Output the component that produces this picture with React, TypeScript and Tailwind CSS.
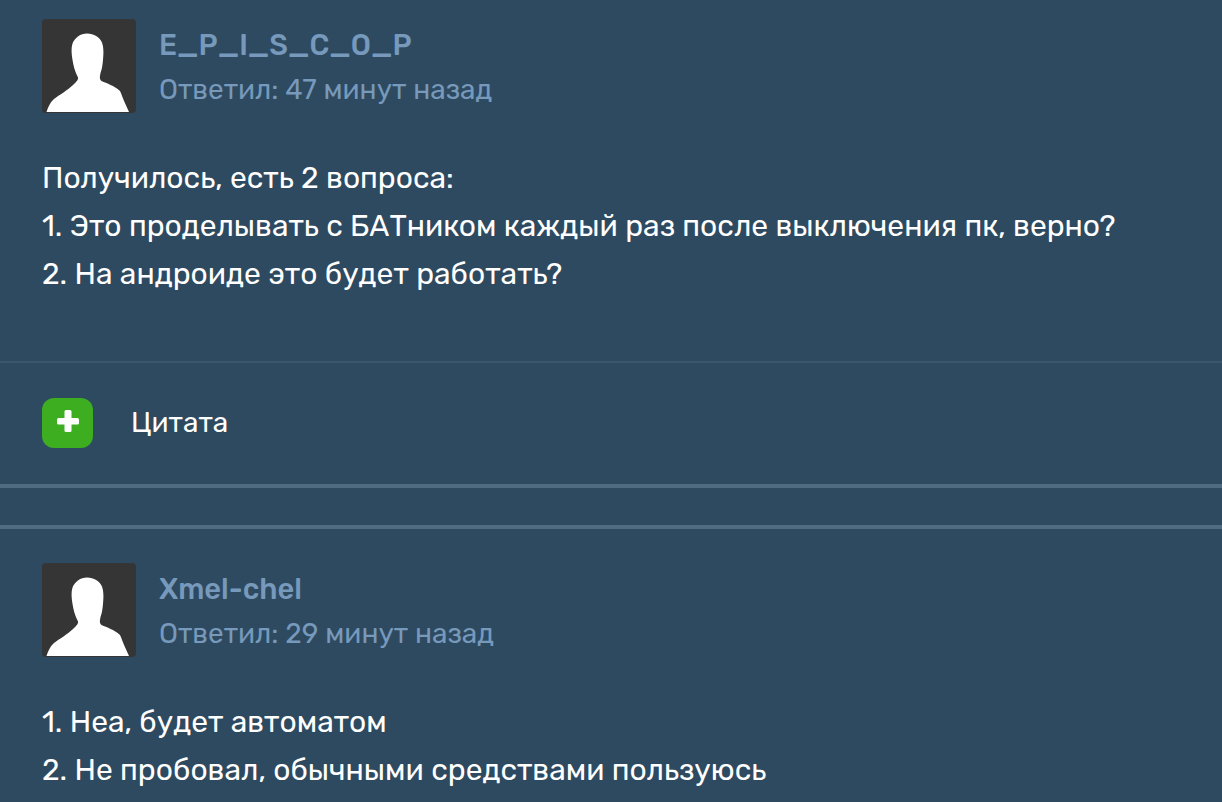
import { Fragment } from "react";

const COMMENTS = [
    {
        author: "E_P_I_S_C_O_P",
        replied: "Ответил: 47 минут назад",
        lines: [
            "Получилось, есть 2 вопроса:",
            "1. Это проделывать с БАТником каждый раз после выключения пк, верно?",
            "2. На андроиде это будет работать?"
        ],
        className: "border-b-4 pt-[19px]",
        hasActions: true
    },
    {
        author: "Xmel-chel",
        replied: "Ответил: 29 минут назад",
        lines: [
            "1. Неа, будет автоматом",
            "2. Не пробовал, обычными средствами пользуюсь"
        ],
        className: "border-t-4 pt-[34px]",
        hasActions: false
    }
];

function Avatar() {
    return (
        <svg viewBox="0 0 94 94" className="size-[94px] shrink-0 rounded bg-[#353535]" aria-hidden="true">
            <path
                fill="#fff"
                d="M4.500 93C6 88 8.500 83 12 80C17 76 26 71 31 66C34 63 36.500 61 36 58.500C33 53 31.500 47 30.500 41C29.500 35 29 29 30.500 24.500C33 18.500 38.500 14.500 45 14.500C52 14.500 57.500 18 60 23.500C62 29 61.500 36 61 41C60.500 46 60 50 58.500 54C58 57 57 60 59.500 62C65 64.500 72 66.500 78 72C80 76 81 80 82.500 83L87 93Z"
            />
        </svg>
    );
}

export default function App() {
    return (
        <main className="min-h-screen bg-[#2e4a60] font-[Rubik,Roboto,sans-serif] text-white">
            <div className="flex flex-col gap-[37px]">
                {COMMENTS.map((comment) => (
                    <article key={comment.author} className={`border-[#4e6b81] ${comment.className}`}>
                        <header className="flex gap-[23px] px-[42px]">
                            <Avatar />
                            <div className="pt-1 text-[#7799bb]">
                                <h3 className="text-[29px] leading-[44px] font-medium">{comment.author}</h3>
                                <p className="text-[28px] leading-[46px]">{comment.replied}</p>
                            </div>
                        </header>

                        <p className="mt-[41px] px-[42px] text-[30px] leading-[48px]">
                            {comment.lines.map((line, i) => (
                                <Fragment key={line}>
                                    {i > 0 && <br />}
                                    {line}
                                </Fragment>
                            ))}
                        </p>

                        {comment.hasActions && (
                            <footer className="mt-[63px] flex items-center gap-[38px] border-t-2 border-[#3b576d] px-[42px] pt-[35px] pb-9">
                                <button
                                    type="button"
                                    aria-label="Плюс"
                                    className="flex h-[50px] w-[51px] items-center justify-center rounded-xl bg-[#3cae20] pb-1"
                                >
                                    <svg viewBox="0 0 22 22" className="size-[22px]" fill="#fff">
                                        <rect x="7.500" y="0" width="7" height="22" rx="1.500" />
                                        <rect x="0" y="8" width="22" height="6.500" rx="1.500" />
                                    </svg>
                                </button>
                                <button type="button" className="text-[28px] leading-[44px]">
                                    Цитата
                                </button>
                            </footer>
                        )}
                    </article>
                ))}
            </div>
        </main>
    );
}
